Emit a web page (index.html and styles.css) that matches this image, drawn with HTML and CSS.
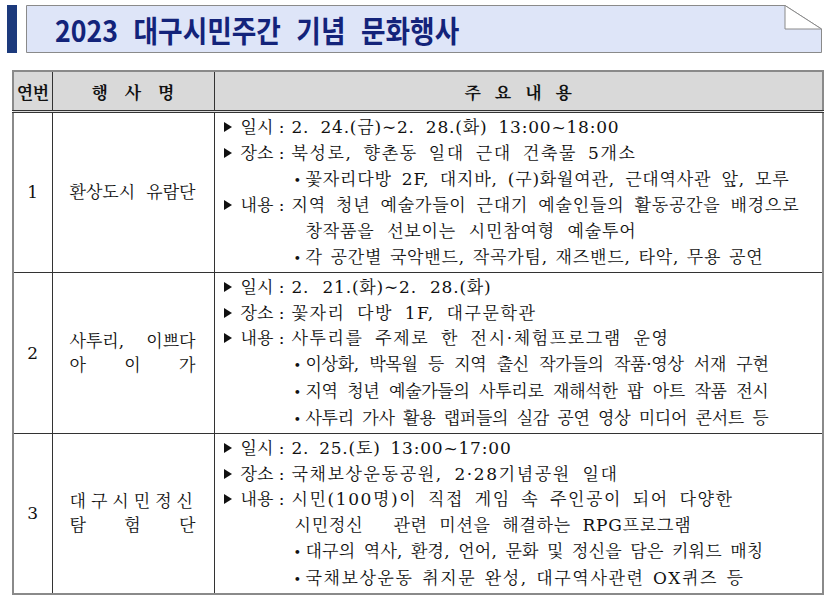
FILE: index.html
```html
<!DOCTYPE html>
<html lang="ko">
<head>
<meta charset="utf-8">
<link rel="stylesheet" href="styles.css">
</head>
<body>
<div class="head">
  <div class="bar"></div>
  <div class="title-box">
    <svg class="title-bg" width="796" height="48" viewBox="0 0 796 48">
      <polygon points="0.5,0.5 759,0.5 795.5,24 795.5,47.5 0.5,47.5" fill="#dee5f8" stroke="#8a8a8a" stroke-width="1"/>
      <polygon points="759,0.5 759,24 795.5,24" fill="#ffffff" stroke="#8a8a8a" stroke-width="1"/>
    </svg>
    <span class="title">2023 대구시민주간 기념 문화행사</span>
  </div>
</div>

<table class="tbl">
  <colgroup>
    <col class="c1"><col class="c2"><col class="c3">
  </colgroup>
  <thead>
    <tr>
      <th class="h-num">연번</th>
      <th class="h-name">행 사 명</th>
      <th class="h-cont">주 요 내 용</th>
    </tr>
  </thead>
  <tbody>
    <tr class="r1">
      <td class="num">1</td>
      <td class="name"><div class="just">환상도시 유람단</div></td>
      <td class="cont">
        <div class="ln w396"><span class="tri"></span><span class="lab">일시 :</span>2. 24.(금)∼2. 28.(화) 13:00~18:00</div>
        <div class="ln wide w413"><span class="tri"></span><span class="lab">장소 :</span>북성로, 향촌동 일대 근대 건축물 5개소</div>
        <div class="ln sub w566"><span class="dot">•</span>꽃자리다방 2F, 대지바, (구)화월여관, 근대역사관 앞, 모루</div>
        <div class="ln w576"><span class="tri"></span><span class="lab">내용 :</span>지역 청년 예술가들이 근대기 예술인들의 활동공간을 배경으로</div>
        <div class="ln ind2 w413">창작품을 선보이는 시민참여형 예술투어</div>
        <div class="ln sub w540"><span class="dot">•</span>각 공간별 국악밴드, 작곡가팀, 재즈밴드, 타악, 무용 공연</div>
      </td>
    </tr>
    <tr class="r2">
      <td class="num">2</td>
      <td class="name"><div class="just">사투리, 이쁘다</div><div class="just">아 이 가</div></td>
      <td class="cont">
        <div class="ln w268"><span class="tri"></span><span class="lab">일시 :</span>2. 21.(화)∼2. 28.(화)</div>
        <div class="ln wide w313"><span class="tri"></span><span class="lab">장소 :</span>꽃자리 다방 1F, 대구문학관</div>
        <div class="ln wide w446"><span class="tri"></span><span class="lab">내용 :</span>사투리를 주제로 한 전시·체험프로그램 운영</div>
        <div class="ln sub tight w545"><span class="dot">•</span>이상화, 박목월 등 지역 출신 작가들의 작품·영상 서재 구현</div>
        <div class="ln sub tight w545"><span class="dot">•</span>지역 청년 예술가들의 사투리로 재해석한 팝 아트 작품 전시</div>
        <div class="ln sub tight w545"><span class="dot">•</span>사투리 가사 활용 랩퍼들의 실감 공연 영상 미디어 콘서트 등</div>
      </td>
    </tr>
    <tr class="r3">
      <td class="num">3</td>
      <td class="name"><div class="spread">대구시민정신</div><div class="just">탐 험 단</div></td>
      <td class="cont">
        <div class="ln w288"><span class="tri"></span><span class="lab">일시 :</span>2. 25.(토) 13:00~17:00</div>
        <div class="ln wide w395"><span class="tri"></span><span class="lab">장소 :</span>국채보상운동공원, 2·28기념공원 일대</div>
        <div class="ln wide w510"><span class="tri"></span><span class="lab">내용 :</span>시민(100명)이 직접 게임 속 주인공이 되어 다양한</div>
        <div class="ln ind3 w468">시민정신<span class="gap"></span>관련 미션을 해결하는 RPG프로그램</div>
        <div class="ln sub mid w540"><span class="dot">•</span>대구의 역사, 환경, 언어, 문화 및 정신을 담은 키워드 매칭</div>
        <div class="ln sub wide w521"><span class="dot">•</span>국채보상운동 취지문 완성, 대구역사관련 OX퀴즈 등</div>
      </td>
    </tr>
  </tbody>
</table>
</body>
</html>
```

FILE: styles.css
```css
body {
  margin: 0;
  background: #ffffff;
  color: #111111;
  font-family: "DejaVu Serif", "Noto Serif CJK KR", "Noto Sans CJK KR", serif;
}

.head {
  display: flex;
  gap: 9px;
  height: 48px;
  padding: 5px 0 0 7px;
}

.bar {
  width: 10px;
  background: #1c3a7c;
}

.title-box {
  position: relative;
  width: 796px;
  height: 48px;
}

.title-bg {
  position: absolute;
  left: 0;
  top: 0;
}

.title {
  position: relative;
  display: inline-block;
  margin-left: 29px;
  font-family: "Noto Sans CJK KR", sans-serif;
  font-weight: 700;
  font-size: 30px;
  line-height: 48px;
  color: #13237a;
  white-space: nowrap;
  word-spacing: 9px;
  transform: scaleX(0.89);
  transform-origin: left center;
}

.tbl {
  margin: 17px 0 0 12px;
  width: 810px;
  table-layout: fixed;
  border-collapse: collapse;
  border: 2px solid #8a8a8a;
  font-size: 17px;
}

.c1 { width: 39px; }
.c2 { width: 162px; }
.c3 { width: 609px; }

.tbl th,
.tbl td {
  border: 1px solid #333333;
  padding: 0;
}

.tbl th {
  height: 38px;
  background: #d9d9d9;
  font-weight: 700;
  border-bottom: 3px double #333333;
}

.h-num {
  letter-spacing: -0.5px;
}

.h-name {
  word-spacing: 11px;
  padding-right: 9px;
}

.h-cont {
  word-spacing: 8px;
}

.r1 td { height: 156px; }
.r2 td { height: 158px; }
.r3 td { height: 155px; }

.num {
  text-align: center;
  vertical-align: middle;
}

.name {
  vertical-align: middle;
  padding: 0 18px 0 17px !important;
  line-height: 24px;
}

.just {
  text-align: justify;
  text-align-last: justify;
}

.spread {
  white-space: nowrap;
  letter-spacing: 5px;
}

.cont {
  vertical-align: top;
  padding: 2px 0 0 9px !important;
  line-height: 25.8px;
}

.ln {
  box-sizing: border-box;
  text-align: justify;
  text-align-last: justify;
  letter-spacing: 0.8px;
}

.ln.wide {
  letter-spacing: 1.6px;
}

.ln.mid {
  letter-spacing: 0.2px;
}

.ln.tight {
  letter-spacing: -0.3px;
}

.ln.sub {
  padding-left: 70px;
}

.ln.ind2 {
  padding-left: 82px;
}

.ln.ind3 {
  padding-left: 71px;
}

.w268 { width: 268px; }
.w288 { width: 288px; }
.w313 { width: 313px; }
.w395 { width: 395px; }
.w396 { width: 396px; }
.w413 { width: 413px; }
.w446 { width: 446px; }
.w468 { width: 468px; }
.w510 { width: 510px; }
.w521 { width: 521px; }
.w540 { width: 540px; }
.w545 { width: 545px; }
.w566 { width: 566px; }
.w576 { width: 576px; }

.tri {
  display: inline-block;
  width: 0;
  height: 0;
  border-left: 8px solid #111111;
  border-top: 5px solid transparent;
  border-bottom: 5px solid transparent;
  margin-right: 9px;
  vertical-align: 1px;
}

.lab {
  display: inline-block;
  width: 51px;
  white-space: nowrap;
  letter-spacing: 0;
  text-align: left;
  text-align-last: left;
}

.dot {
  display: inline-block;
  width: 12px;
  font-size: 13px;
  letter-spacing: 0;
}

.gap {
  display: inline-block;
  width: 30px;
}
```
